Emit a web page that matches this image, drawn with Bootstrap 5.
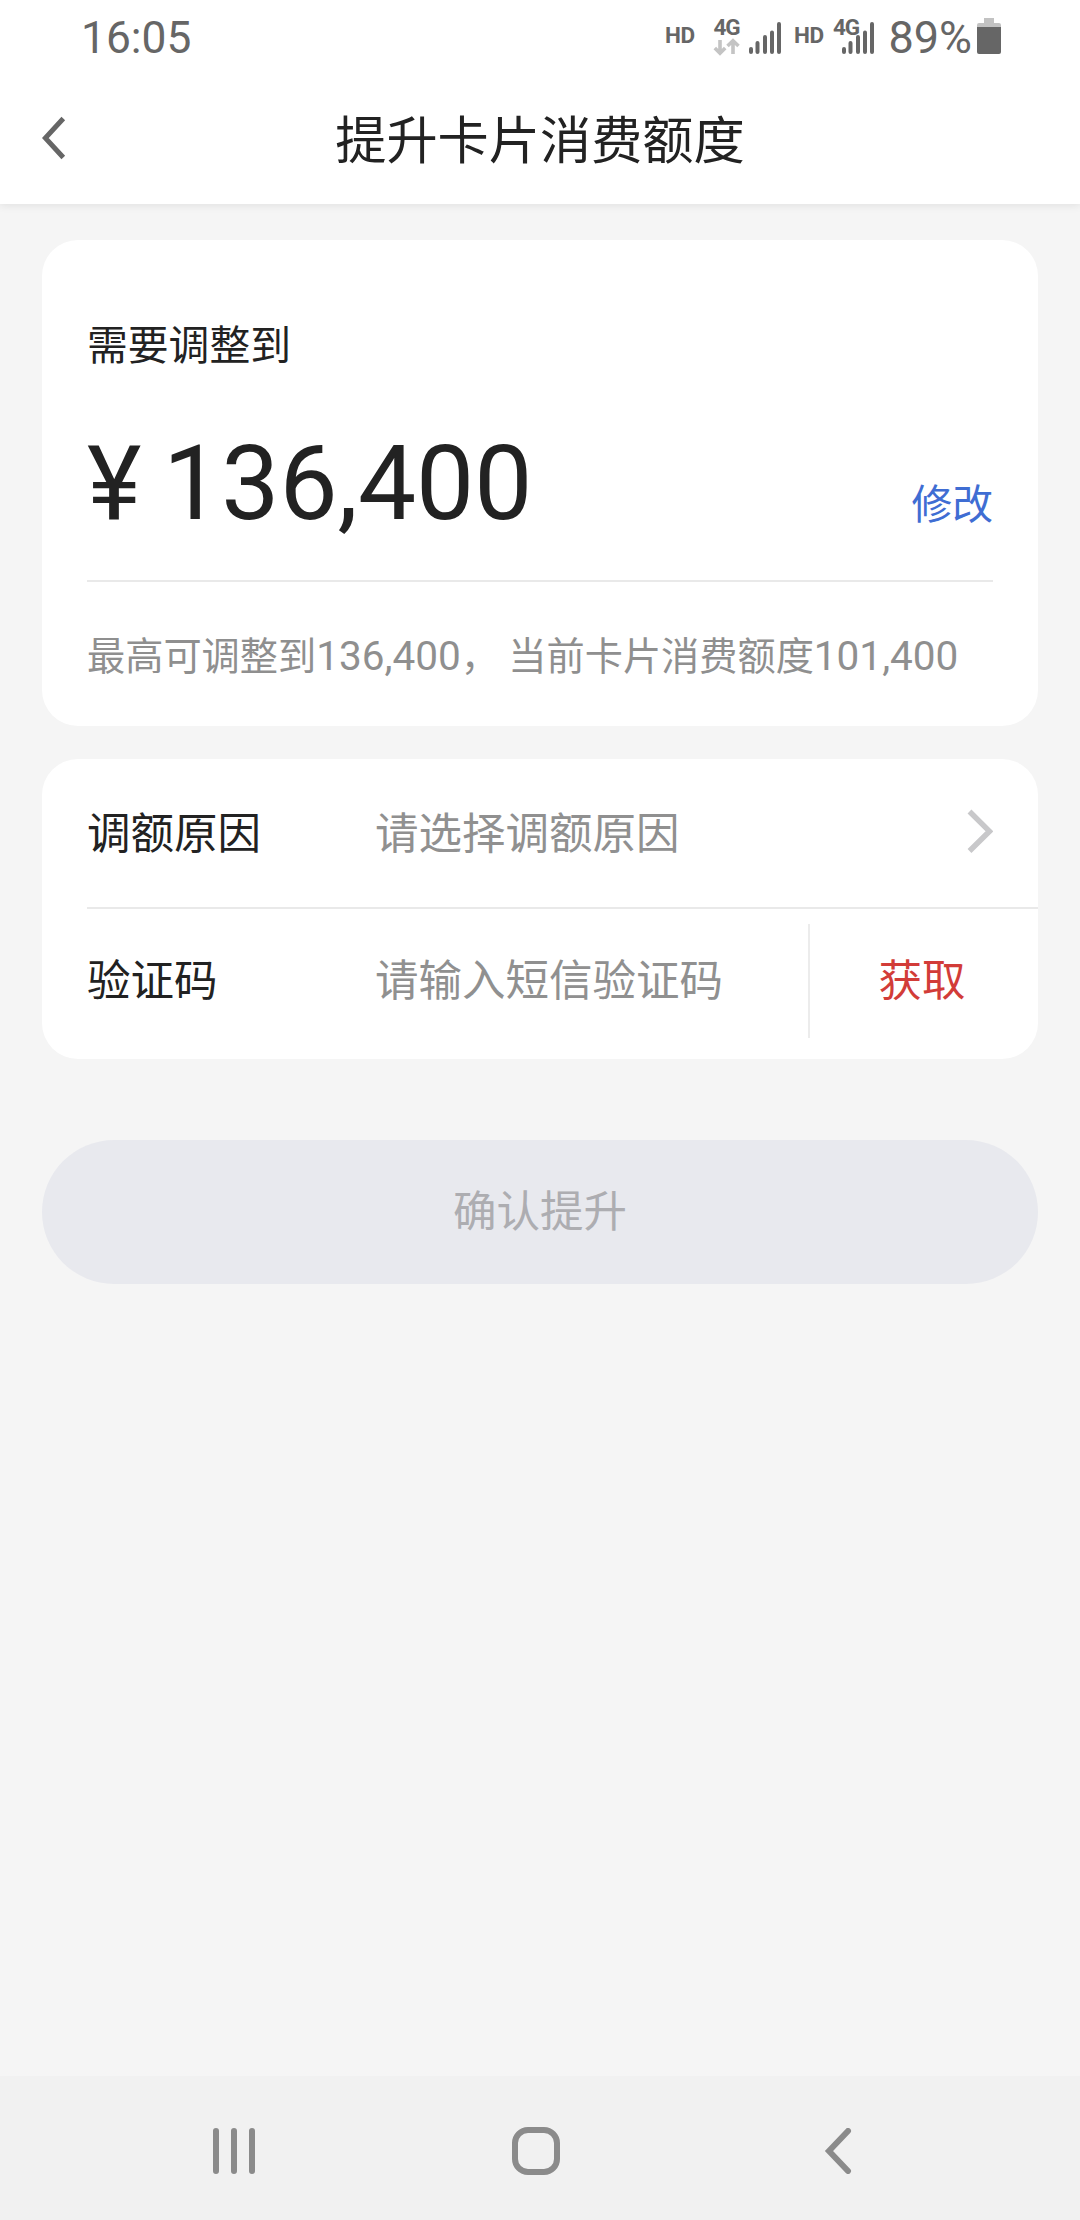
<!DOCTYPE html>
<html lang="zh-CN">
<head>
<meta charset="utf-8">
<meta name="viewport" content="width=device-width, initial-scale=1">
<title>提升卡片消费额度</title>
<link href="https://cdn.jsdelivr.net/npm/bootstrap@5.3.0/dist/css/bootstrap.min.css" rel="stylesheet">
<style>
body{background:#f5f5f5;color:#222;font-family:Roboto,"Noto Sans CJK SC",sans-serif;height:2220px;line-height:1;overflow:hidden}
svg{display:block;flex:none}
.statusbar{height:72px;padding:0 78px 0 81px;color:#666}
.clock{font-size:44.3px;line-height:76px}
.net{width:338px;height:72px}
.appbar{height:132px;padding-left:42px;padding-right:42px}
.appbar h1{font-size:51.2px;line-height:60px;margin:8px 0 0}
.topbar{box-shadow:0 2px 8px rgba(0,0,0,.08)}
.side{width:30px}
.content{padding:36px 42px 0}
.panel{border:0;border-radius:36px;overflow:hidden}
.limit{height:486px;padding:0 45px;margin-bottom:33px}
.caption-a{font-size:40.8px;line-height:50px;padding-top:81px}
.amount-row{height:211px;border-bottom:2px solid #e9e9e9;padding-bottom:50px}
.amount{font-size:103.5px;line-height:104px;margin-bottom:-6px;word-spacing:-4px}
.edit{font-size:40.8px;line-height:46px;margin-bottom:2px;color:#3f6dd3}
.note{font-size:38.2px;line-height:50px;color:#8f8f8f;padding-top:49px;white-space:pre}
.note span{font-size:40.5px}
.form-a{height:300px;padding-left:45px;font-size:43.5px}
.line-a{height:150px;padding-top:4px;border-bottom:2px solid #e9e9e9;padding-right:45px}
.line-a svg{margin-bottom:8px}
.line-b{height:150px;padding-bottom:7px}
.line-b .label-a,.line-b .hint,.code-text{padding-top:3px}
.label-a{width:288px}
.hint{color:#909090}
.get{width:230px;height:114px;border-left:2px solid #ececec;color:#d23c38;padding-right:4px}
.confirm{height:144px;margin-top:81px;padding-top:8px;font-size:43.5px;background:#e8e9ee!important;color:#adadb1!important;border:0;opacity:1!important}
.sysnav{height:144px;background:#f1f1f1;padding:6px 228px 0 212px}
.home-key{margin-right:8px}
</style>
<script src="https://cdn.jsdelivr.net/npm/bootstrap@5.3.0/dist/js/bootstrap.bundle.min.js"></script>
</head>
<body class="d-flex flex-column">
<header class="topbar bg-white">
  <div class="statusbar d-flex justify-content-between">
    <span class="clock">16:05</span>
    <svg class="net" viewBox="664 0 338 72" fill="#666">
      <g font-family="Roboto" font-weight="700" font-size="22.5">
        <text x="665" y="43.3" textLength="30">HD</text>
        <text x="713.500" y="35" textLength="27">4G</text>
        <text x="794" y="43.3" textLength="30">HD</text>
        <text x="833" y="35" textLength="27">4G</text>
      </g>
      <g fill="none" stroke="#c4c4c4" stroke-width="3.600">
        <path d="M720 40v13M714.800 48l5.200 5.200 5.200-5.200M733 54V41M727.500 46l5.500-5.200 5.500 5.200"/>
      </g>
      <g stroke="#666" stroke-width="4" stroke-linecap="round">
        <path d="M751 49v3M757.500 43v9M765 37v15M772 32.500v19.500M779 24v28"/>
        <path d="M844 49v3M850.500 43v9M858 37v15M865 32.500v19.500M872 24v28"/>
      </g>
      <text x="888.500" y="53" font-family="Roboto" font-size="45">89%</text>
      <path fill="#c2c2c2" d="M984 18h10v5h5q2 0 2 2v3h-24v-3q0-2 2-2h5z"/>
      <path d="M977 27h24v25q0 2-2 2h-20q-2 0-2-2z"/>
    </svg>
  </div>
  <div class="appbar d-flex align-items-center justify-content-between">
    <svg class="side" width="30" height="44" viewBox="0 0 30 44" fill="none" stroke="#666" stroke-width="5"><path d="M21.300 2.500 3.300 22 21.300 41.500"/></svg>
    <h1 class="fw-normal">提升卡片消费额度</h1>
    <span class="side"></span>
  </div>
</header>
<main class="content flex-grow-1">
  <section class="card panel limit">
    <div class="caption-a">需要调整到</div>
    <div class="amount-row d-flex justify-content-between align-items-end">
      <span class="amount">¥ 136,400</span>
      <a class="edit text-decoration-none" href="#">修改</a>
    </div>
    <div class="note">最高可调整到<span>136,400</span>， 当前卡片消费额度<span>101,400</span></div>
  </section>
  <section class="card panel form-a">
    <div class="line-a d-flex align-items-center">
      <span class="label-a">调额原因</span><span class="hint flex-grow-1">请选择调额原因</span>
      <svg width="26" height="44" viewBox="0 0 26 44" fill="none" stroke="#c8c8ca" stroke-width="5.500"><path d="M2.500 2.500 22.500 22.300 2.500 42"/></svg>
    </div>
    <div class="line-b d-flex align-items-center">
      <span class="label-a">验证码</span><span class="hint flex-grow-1">请输入短信验证码</span>
      <span class="get d-flex align-items-center justify-content-center"><span class="code-text">获取</span></span>
    </div>
  </section>
  <button class="btn confirm w-100 rounded-pill" disabled>确认提升</button>
</main>
<nav class="sysnav d-flex align-items-center justify-content-between">
  <svg width="44" height="46" viewBox="0 0 44 46" stroke="#8b8b8b" stroke-width="6" stroke-linecap="round"><path d="M4 3v40M22 3v40M40 3v40"/></svg>
  <svg class="home-key" width="50" height="50" viewBox="0 0 50 50" fill="none" stroke="#8b8b8b" stroke-width="6"><rect x="4" y="4" width="42" height="42" rx="13"/></svg>
  <svg width="28" height="46" viewBox="0 0 28 46" fill="none" stroke="#8b8b8b" stroke-width="6" stroke-linecap="round"><path d="M24 3 5 23 24 43"/></svg>
</nav>
</body>
</html>
